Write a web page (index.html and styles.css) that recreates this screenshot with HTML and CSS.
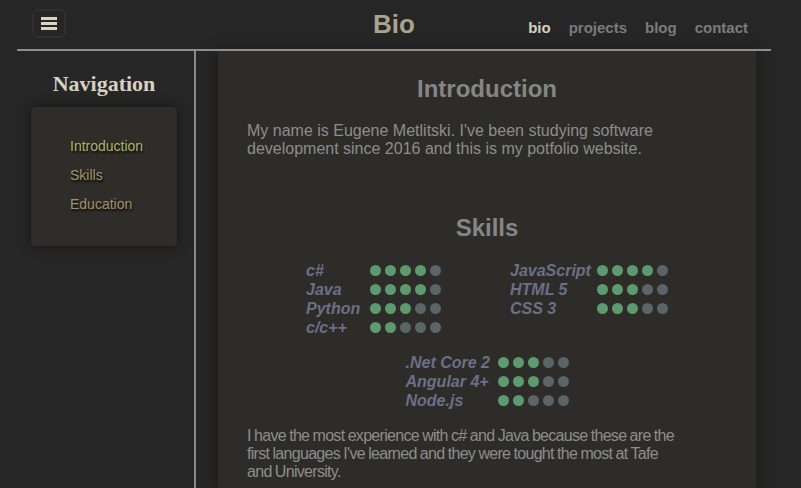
FILE: index.html
```html
<!DOCTYPE html>
<html lang="en">
<head>
<meta charset="utf-8">
<title>Bio</title>
<link rel="stylesheet" href="styles.css">
</head>
<body>
<div class="page">
  <header class="topbar">
    <button class="menu-btn" aria-label="menu">
      <span class="bar"></span><span class="bar"></span><span class="bar"></span>
    </button>
    <h1 class="title">Bio</h1>
    <nav class="topnav">
      <a class="active">bio</a>
      <a>projects</a>
      <a>blog</a>
      <a>contact</a>
    </nav>
  </header>
  <div class="layout">
    <aside class="sidebar">
      <h2 class="side-title">Navigation</h2>
      <div class="side-card">
        <ul class="side-links">
          <li class="current">Introduction</li>
          <li>Skills</li>
          <li>Education</li>
        </ul>
      </div>
    </aside>
    <main class="main">
      <article class="content">
        <h2 class="heading">Introduction</h2>
        <p class="text">My name is Eugene Metlitski. I've been studying software development since 2016 and this is my potfolio website.</p>
        <h2 class="heading heading-skills">Skills</h2>
        <div class="skills-top">
          <div class="skill-group g-left">
            <span class="label">c#</span><span class="dots"><i class="on"></i><i class="on"></i><i class="on"></i><i class="on"></i><i></i></span>
            <span class="label">Java</span><span class="dots"><i class="on"></i><i class="on"></i><i class="on"></i><i class="on"></i><i></i></span>
            <span class="label">Python</span><span class="dots"><i class="on"></i><i class="on"></i><i class="on"></i><i></i><i></i></span>
            <span class="label">c/c++</span><span class="dots"><i class="on"></i><i class="on"></i><i></i><i></i><i></i></span>
          </div>
          <div class="skill-group g-right">
            <span class="label">JavaScript</span><span class="dots"><i class="on"></i><i class="on"></i><i class="on"></i><i class="on"></i><i></i></span>
            <span class="label">HTML 5</span><span class="dots"><i class="on"></i><i class="on"></i><i class="on"></i><i></i><i></i></span>
            <span class="label">CSS 3</span><span class="dots"><i class="on"></i><i class="on"></i><i class="on"></i><i></i><i></i></span>
          </div>
        </div>
        <div class="skills-bottom">
          <div class="skill-group g-bottom">
            <span class="label">.Net Core 2</span><span class="dots"><i class="on"></i><i class="on"></i><i class="on"></i><i></i><i></i></span>
            <span class="label">Angular 4+</span><span class="dots"><i class="on"></i><i class="on"></i><i class="on"></i><i></i><i></i></span>
            <span class="label">Node.js</span><span class="dots"><i class="on"></i><i class="on"></i><i></i><i></i><i></i></span>
          </div>
        </div>
        <p class="text text-after">I have the most experience with c# and Java because these are the first languages I've learned and they were tought the most at Tafe and University.</p>
      </article>
    </main>
  </div>
</div>
</body>
</html>
```

FILE: styles.css
```css
* { box-sizing: border-box; }
html, body { margin: 0; padding: 0; height: 100%; }
body {
  background: #262626;
  font-family: "Liberation Sans", Arial, sans-serif;
  overflow: hidden;
}
.page {
  margin: 0 30px 0 17px;
  height: 100%;
  display: flex;
  flex-direction: column;
}
.topbar {
  height: 51px;
  border-bottom: 2px solid #8e8e8e;
  display: flex;
  align-items: center;
  position: relative;
  padding: 0 23px 0 15px;
}
.menu-btn {
  width: 34px;
  height: 29px;
  margin-top: -2px;
  background: transparent;
  border: 2px solid #303030;
  border-radius: 6px;
  padding: 0;
  display: flex;
  flex-direction: column;
  align-items: center;
  justify-content: center;
  gap: 2px;
}
.menu-btn .bar {
  display: block;
  width: 16px;
  height: 3px;
  background: #d9d5c5;
}
.title {
  position: absolute;
  left: 0;
  right: 0;
  top: 9px;
  margin: 0;
  text-align: center;
  font-size: 26px;
  line-height: 30px;
  font-weight: bold;
  color: #a8a28f;
  pointer-events: none;
}
.topnav {
  margin-left: auto;
  display: flex;
  gap: 18px;
  padding-top: 7px;
}
.topnav a {
  font-size: 15px;
  font-weight: bold;
  color: #7b7b7b;
  line-height: 18px;
}
.topnav a.active { color: #d6d0c0; }

.layout {
  flex: 1;
  display: flex;
  min-height: 0;
}
.sidebar {
  width: 179px;
  flex: none;
  padding-left: 14px;
  border-right: 2px solid #8a8a8a;
}
.side-title {
  width: 146px;
  margin: 20px 0 0;
  text-align: center;
  font-family: "Liberation Serif", "Times New Roman", serif;
  font-size: 22px;
  line-height: 26px;
  font-weight: bold;
  color: #d8d0c2;
}
.side-card {
  width: 146px;
  margin-top: 10px;
  height: 139px;
  background: #2f2d29;
  border-radius: 4px;
  box-shadow: 0 0 12px rgba(0,0,0,0.45);
  padding: 25px 0 0 39px;
}
.side-links {
  list-style: none;
  margin: 0;
  padding: 0;
}
.side-links li {
  font-size: 14px;
  line-height: 29px;
  color: #a0916c;
  text-shadow: 1px 2px 2px rgba(0,0,0,0.8);
}
.side-links li.current { color: #a7b46a; }

.main {
  flex: 1;
  padding: 0 15px 0 22px;
  min-width: 0;
}
.content {
  height: 100%;
  background: #2e2c29;
  box-shadow: 0 0 14px rgba(0,0,0,0.4);
  padding: 24px 29px 0;
  color: #8d8d8d;
}
.heading {
  margin: 0;
  text-align: center;
  font-size: 24px;
  line-height: 28px;
  font-weight: bold;
  color: #868686;
}
.heading-skills { margin-top: 56px; }
.text {
  margin: 19px 0 0;
  padding-right: 45px;
  font-size: 16px;
  line-height: 18px;
  color: #8d8d8d;
}
.text-after {
  margin-top: 17px;
  letter-spacing: -0.7px;
  word-spacing: -0.5px;
}

.skills-top {
  margin-top: 19px;
  display: flex;
  justify-content: center;
  align-items: flex-start;
  gap: 69px;
}
.skills-bottom {
  margin-top: 16px;
  display: flex;
  justify-content: center;
}
.skill-group {
  display: grid;
  grid-auto-rows: 19px;
  align-items: center;
}
.g-left { grid-template-columns: 64px auto; }
.g-right { grid-template-columns: 87px auto; }
.g-bottom { grid-template-columns: 92px auto; }
.label {
  font-size: 16px;
  line-height: 19px;
  font-weight: bold;
  font-style: italic;
  color: #6a7086;
  white-space: nowrap;
}
.dots {
  display: flex;
  gap: 4px;
}
.dots i {
  display: block;
  width: 11px;
  height: 11px;
  border-radius: 50%;
  background: #5b6568;
}
.dots i.on { background: #5d9b6e; }
```
